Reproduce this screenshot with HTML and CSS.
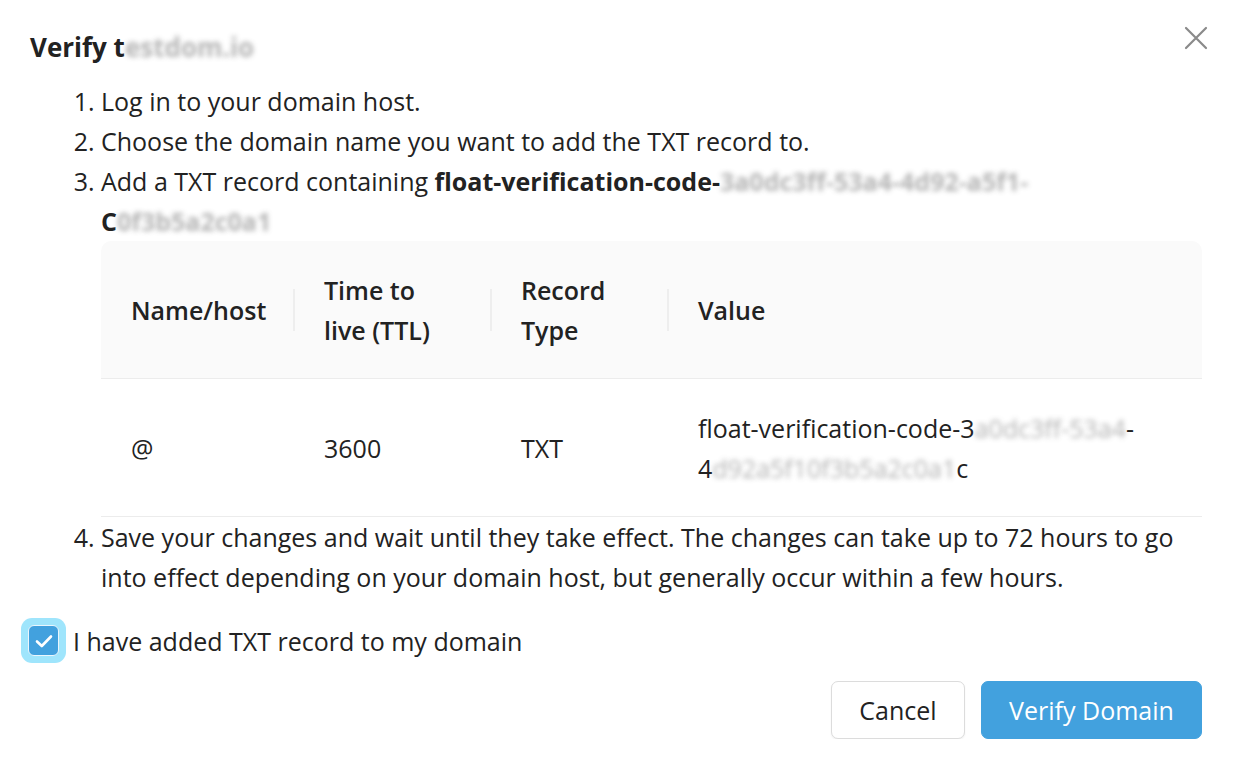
FILE: index.html
```html
<!DOCTYPE html>
<html lang="en">
<head>
<meta charset="utf-8">
<title>Verify domain</title>
<link rel="stylesheet" href="styles.css">
</head>
<body>
<div class="modal">
  <div class="modal-head">
    <h1 class="title">Verify t<span class="blur">estdom.io</span></h1>
    <button class="close" aria-label="Close">
      <svg width="24" height="24" viewBox="0 0 24 24"><path d="M2 2L22 22M22 2L2 22" stroke="#8a8a8a" stroke-width="2.2" stroke-linecap="round" fill="none"/></svg>
    </button>
  </div>
  <ol class="steps">
    <li>Log in to your domain host.</li>
    <li>Choose the domain name you want to add the TXT record to.</li>
    <li>Add a TXT record containing <b class="code">float-verification-code-<span class="blur">3a0dc3ff-53a4-4d92-a5f1-</span><br>C<span class="blur">0f3b5a2c0a1</span></b>
      <div class="table">
        <div class="row head">
          <div class="cell c1">Name/host</div>
          <div class="cell c2"><span class="sep"></span>Time to live (TTL)</div>
          <div class="cell c3"><span class="sep"></span>Record Type</div>
          <div class="cell c4"><span class="sep"></span>Value</div>
        </div>
        <div class="row body">
          <div class="cell c1">@</div>
          <div class="cell c2">3600</div>
          <div class="cell c3">TXT</div>
          <div class="cell c4">float-verification-code-3<span class="blur">a0dc3ff-53a4</span>-<br>4<span class="blur">d92a5f10f3b5a2c0a1</span>c</div>
        </div>
      </div>
    </li>
    <li>Save your changes and wait until they take effect. The changes can take up to 72 hours to go into effect depending on your domain host, but generally occur within a few hours.</li>
  </ol>
  <label class="check-row">
    <span class="ring"><span class="box"><svg width="18" height="14" viewBox="0 0 18 14"><path d="M2 7.5L6.8 12L16 2.5" stroke="#fff" stroke-width="2.6" fill="none" stroke-linecap="round" stroke-linejoin="round"/></svg></span></span>
    <span class="check-label">I have added TXT record to my domain</span>
  </label>
  <div class="actions">
    <button class="btn cancel">Cancel</button>
    <button class="btn primary">Verify Domain</button>
  </div>
</div>
</body>
</html>
```
FILE: styles.css
```css
* { box-sizing: border-box; }
html, body { margin: 0; padding: 0; background: #fff; }
body {
  font-family: "Open Sans", "Noto Sans", "Liberation Sans", sans-serif;
  color: #222;
  font-size: 25px;
  line-height: 40px;
}
.modal {
  padding: 29px 32px 0 30px;
  display: flex;
  flex-direction: column;
}
.modal-head {
  display: flex;
  justify-content: space-between;
  align-items: flex-start;
}
.title {
  margin: 0;
  font-size: 26px;
  font-weight: 700;
  line-height: 36px;
  color: #222;
}
.close {
  border: 0;
  background: none;
  padding: 0;
  margin: -3px -6px 0 0;
  cursor: pointer;
  width: 24px;
  height: 24px;
}
.blur {
  color: transparent;
  text-shadow: 0 0 5px rgba(90,90,90,0.45);
}
.steps {
  margin: 16px 0 0 71px;
  padding: 0;
  list-style-position: outside;
}
.steps li { margin: 0; padding-left: 0; }
.code { font-weight: 700; }
.row {
  display: flex;
  align-items: center;
}
.row.head {
  background: #fafafa;
  border-radius: 10px 10px 0 0;
  height: 138px;
  font-weight: 600;
  border-bottom: 1px solid #ececec;
}
.row.body {
  height: 138px;
  border-bottom: 1px solid #ececec;
}
.cell {
  position: relative;
  padding: 0 20px 0 30px;
}
.c1 { width: 193px; }
.c2 { width: 197px; padding-right: 40px; }
.c3 { width: 177px; }
.c4 { flex: 1; padding-right: 30px; }
.sep {
  position: absolute;
  left: -1px;
  top: 50%;
  margin-top: -21px;
  width: 2px;
  height: 42px;
  background: #eeeeee;
}
.check-row {
  display: flex;
  align-items: center;
  gap: 7px;
  margin: 21px 0 0 -9px;
}
.ring {
  width: 45px;
  height: 45px;
  border-radius: 11px;
  background: #9fe5fc;
  display: flex;
  align-items: center;
  justify-content: center;
}
.box {
  width: 31px;
  height: 31px;
  border-radius: 6px;
  background: #42a1de;
  border: 1.5px solid #eaf6fd;
  display: flex;
  align-items: center;
  justify-content: center;
}
.actions {
  display: flex;
  justify-content: flex-end;
  gap: 16px;
  margin-top: 18px;
}
.btn {
  font-family: inherit;
  font-size: 25px;
  height: 58px;
  border-radius: 7px;
  padding: 0 16px;
  cursor: pointer;
}
.cancel {
  background: #fff;
  border: 1px solid #dcdcdc;
  color: #222;
  width: 134px;
  box-shadow: 0 1px 2px rgba(0,0,0,0.06);
}
.primary {
  background: #42a1de;
  border: 1px solid #42a1de;
  color: #fff;
  width: 221px;
}
```
